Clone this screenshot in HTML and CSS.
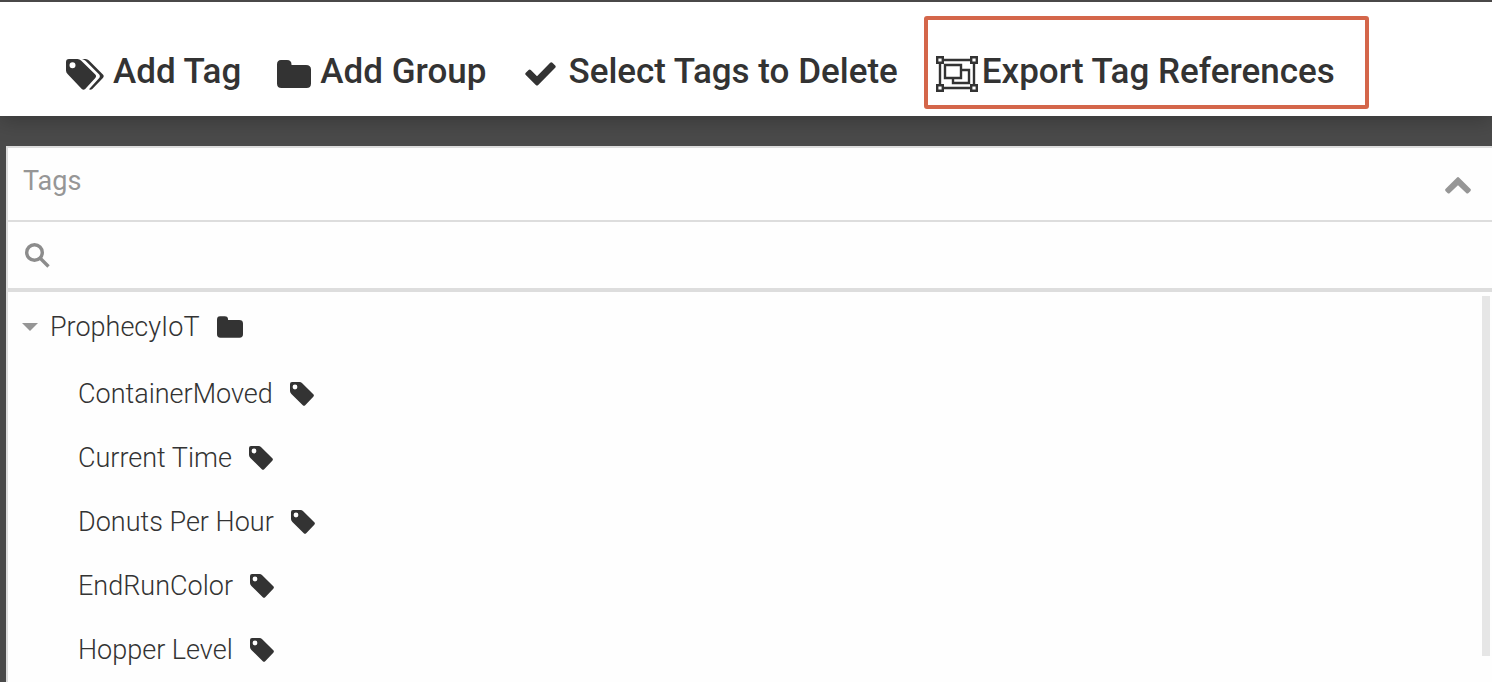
FILE: index.html
```html
<!doctype html>
<html lang="en">
  <head>
    <meta charset="UTF-8" />
    <meta name="viewport" content="width=device-width, initial-scale=1.0" />
    <title>Tags</title>
    <link rel="stylesheet" href="styles.css">
  </head>
  <body>
    <!-- Shared icon shapes -->
    <svg class="sprite" aria-hidden="true">
      <symbol id="icon-tag" viewBox="0 0 24 24">
        <path fill-rule="evenodd" d="M2 0H9.500Q11 0 12.200 1.200L23.300 12.300Q24.500 13.500 23.300 14.700L15.200 23.300Q14 24.400 12.800 23.300L1.400 12Q0 10.600 0 9V2Q0 0 2 0ZM5 2.600A2.400 2.400 0 1 0 5 7.400A2.400 2.400 0 1 0 5 2.600Z" />
      </symbol>
      <symbol id="icon-folder" viewBox="0 0 34 28">
        <path d="M4 0H10Q14.500 0 14.500 4.500V5H29Q34 5 34 9.500V23.500Q34 28 29.500 28H4.500Q0 28 0 23.500V4.500Q0 0 4 0Z" />
      </symbol>
    </svg>

    <!-- Toolbar -->
    <header class="toolbar">
      <button class="tool" type="button">
        <svg class="icon-tags" viewBox="0 0 38 31">
          <path fill-rule="evenodd" d="M3 0H11.500Q13.500 0 15 1.500L29.300 15.500Q30.800 17.200 29.300 18.900L19.200 29.900Q17.500 31.400 15.800 29.900L1.800 15.300Q0 13.500 0 11.500V3Q0 0 3 0ZM6.500 3.300A3 3 0 1 0 6.500 9.300A3 3 0 1 0 6.500 3.300Z" />
          <path d="M16 0H19.500Q21.500 0 23 1.500L36.900 15.500Q38.500 17.200 36.900 18.900L26.300 29.900Q24.700 31.300 23 30.300L33.200 19Q34.500 17.200 33.200 15.500L19.500 1.800Q18 .4 16 0Z" />
        </svg>
        <span>Add Tag</span>
      </button>
      <button class="tool" type="button">
        <svg class="icon-folder"><use href="#icon-folder" /></svg>
        <span>Add Group</span>
      </button>
      <button class="tool" type="button">
        <svg class="icon-check" viewBox="0 0 31 24">
          <path d="M25.200.8Q26.300-.3 27.400.8L30.200 3.600Q31.200 4.700 30.200 5.800L13.200 23Q12 24.200 10.800 23L.8 13Q-.3 11.900.8 10.800L3.600 8Q4.700 6.900 5.800 8L12 14.200Z" />
        </svg>
        <span>Select Tags to Delete</span>
      </button>
      <button class="tool tool-highlight" type="button">
        <svg class="icon-group" viewBox="0 0 42 36">
          <path d="M7 4H35M7 32H35M4 7V29M38 7V29" />
          <path d="M1.200 1.200H6.800V6.800H1.200ZM35.200 1.200H40.800V6.800H35.200ZM1.200 29.200H6.800V34.800H1.200ZM35.200 29.200H40.800V34.800H35.200Z" />
          <path d="M9 9H25V22H9ZM25 14H33V27H17V22" />
        </svg>
        <span>Export Tag References</span>
      </button>
    </header>

    <!-- Tag browser -->
    <main class="panel">
      <div class="panel-header">
        <h1>Tags</h1>
        <button class="collapse" type="button" aria-label="Collapse">
          <svg class="icon-chevron" viewBox="0 0 26 17">
            <path d="M11.800.7Q13-.5 14.200.7L25.300 11.800Q26.500 13 25.300 14.200L23.500 16Q22.300 17 21.200 16L13 8.200L4.800 16Q3.700 17 2.500 16L.7 14.200Q-.5 13 .7 11.800Z" />
          </svg>
        </button>
      </div>
      <div class="search">
        <label for="search" aria-label="Search tags">
          <svg class="icon-search" viewBox="0 0 25 25">
            <circle cx="9.500" cy="9.500" r="7.800" />
            <path d="M15 15L23.500 23.500" />
          </svg>
        </label>
        <input type="text" id="search" />
      </div>
      <div class="tree">
        <div class="tree-list">
          <button class="group" type="button" aria-expanded="true">
            <svg class="icon-caret" viewBox="0 0 16 8"><path d="M0 0H16L8 8Z" /></svg>
            <span>ProphecyIoT</span>
            <svg class="icon-folder-small"><use href="#icon-folder" /></svg>
          </button>
          <ul>
            <li>ContainerMoved <svg class="icon-tag"><use href="#icon-tag" /></svg></li>
            <li>Current Time <svg class="icon-tag"><use href="#icon-tag" /></svg></li>
            <li>Donuts Per Hour <svg class="icon-tag"><use href="#icon-tag" /></svg></li>
            <li>EndRunColor <svg class="icon-tag"><use href="#icon-tag" /></svg></li>
            <li>Hopper Level <svg class="icon-tag"><use href="#icon-tag" /></svg></li>
          </ul>
        </div>
        <div class="scrollbar"></div>
      </div>
    </main>
  </body>
</html>
```
FILE: styles.css
```css
* {
  box-sizing: border-box;
}
body {
  font-family: Roboto, "Liberation Sans", sans-serif;
  background-color: #4a4a4a;
  color: #333;
  display: flex;
  flex-direction: column;
  min-height: 100vh;
  margin: 0;
}
button {
  display: flex;
  align-items: center;
  padding: 0;
  border: 0;
  background: none;
  color: inherit;
  font: inherit;
  cursor: pointer;
}
svg {
  flex: none;
  fill: currentColor;
}
.sprite {
  display: none;
}
.toolbar {
  display: flex;
  gap: 36px;
  padding: 14px 24px 7px 66px;
  border-top: 2px solid #4a4848;
  background-color: white;
  box-shadow: 0 4px 20px rgba(0, 0, 0, 0.25);
}
.tool {
  gap: 9px;
  padding-top: 19px;
  font-size: 35px;
  font-weight: 500;
  line-height: 44px;
  white-space: nowrap;
}
.tool svg {
  margin-top: 4px;
}
.tool-highlight {
  gap: 4px;
  padding: 30px 30px 11px 8px;
  margin-left: -10px;
  border: 4px solid #d4664a;
  border-radius: 3px;
}
.icon-tags {
  width: 38px;
  height: 31px;
}
.icon-folder {
  width: 34px;
  height: 28px;
}
.icon-check {
  width: 31px;
  height: 24px;
  margin: 0 3px;
}
.icon-group {
  width: 42px;
  height: 36px;
  fill: none;
  stroke: currentColor;
  stroke-width: 2.4;
}
.panel {
  display: flex;
  flex: 1;
  flex-direction: column;
  margin: 30px 0 0 6px;
  border-top: 2px solid #ddd;
  border-left: 2px solid #ddd;
  background-color: #fefefe;
  font-size: 27px;
  font-weight: 300;
}
.panel-header {
  display: flex;
  justify-content: space-between;
  align-items: center;
  height: 74px;
  padding: 0 21px 0 15px;
  border-bottom: 2px solid #ddd;
  color: #969696;
}
.panel-header h1 {
  margin: 0 0 6px;
  font-size: 27px;
  font-weight: 400;
}
.icon-chevron {
  width: 26px;
  height: 17px;
  margin-top: 3px;
}
.search {
  display: flex;
  align-items: center;
  gap: 12px;
  height: 70px;
  padding: 0 17px;
  border-bottom: 4px solid #ddd;
}
.search input {
  flex: 1;
  border: 0;
  outline: 0;
  background: none;
  color: inherit;
  font: inherit;
}
.icon-search {
  display: block;
  width: 25px;
  height: 25px;
  fill: none;
  stroke: #8c8c8c;
  stroke-width: 3.4;
}
.tree {
  display: flex;
  flex: 1;
}
.tree-list {
  flex: 1;
}
.group {
  height: 70px;
  padding-left: 14px;
}
.group span {
  margin: 0 17px 0 12px;
}
.icon-caret {
  width: 16px;
  height: 8px;
  color: #969696;
}
.icon-folder-small {
  width: 26px;
  height: 22px;
}
.tree ul {
  margin: 0;
  padding: 0 0 0 70px;
  list-style: none;
}
.tree li {
  display: flex;
  align-items: center;
  gap: 17px;
  height: 64px;
}
.icon-tag {
  width: 24px;
  height: 24px;
}
.scrollbar {
  width: 8px;
  height: 360px;
  margin: 4px 2px 0 0;
  background-color: #e6e6e6;
}
```
